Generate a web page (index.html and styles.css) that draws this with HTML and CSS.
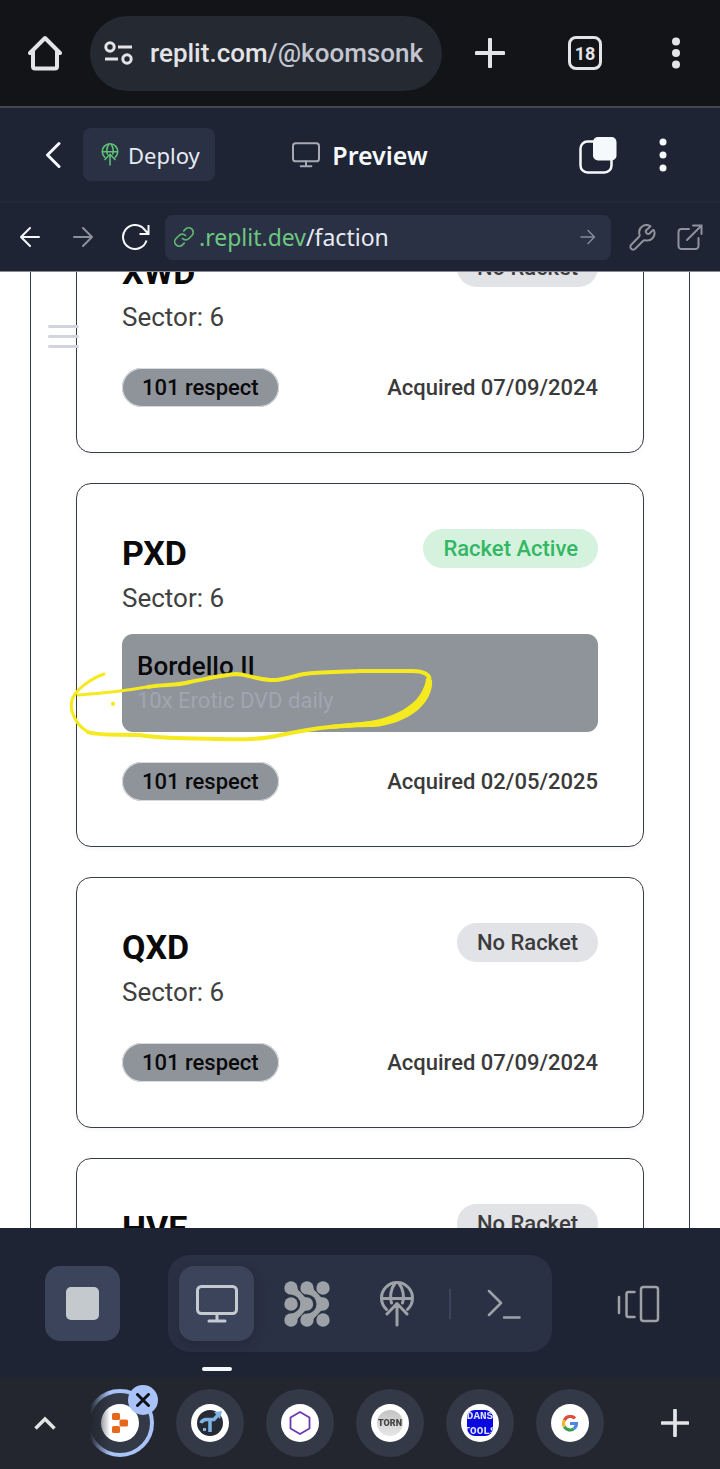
FILE: index.html
```html
<!DOCTYPE html>
<html lang="en">
<head>
<meta charset="utf-8">
<meta name="viewport" content="width=device-width, initial-scale=1">
<title>Faction preview</title>
<link rel="stylesheet" href="styles.css">
</head>
<body>
<svg class="sprite" aria-hidden="true">
  <symbol id="i-globe" viewBox="0 0 36 46"><path d="M7.500 28.500A15.500 15.500 0 1 1 28.500 28.500M2.500 17.500H33.500M16.500 2C12 7 10.500 15 12.500 22M19.500 2C24 7 25.500 15 23.500 22M18 23V44M8 33L18 22.500L28 33"/></symbol>
  <symbol id="i-monitor" viewBox="0 0 42 38"><rect x="1.500" y="1.500" width="39" height="27" rx="4"/><path d="M21 28.500V36M13 36H29"/></symbol>
  <symbol id="i-plus" viewBox="0 0 30 30"><path d="M15 1.500V28.500M1.500 15H28.500"/></symbol>
</svg>
<div class="app">
  <header class="browser">
    <button class="browser-btn home" aria-label="Home"><svg width="34" height="36" viewBox="0 0 34 36"><path d="M5 16V31.500a2 2 0 0 0 2 2H27a2 2 0 0 0 2-2V16M2 18L17 3L32 18" fill="none" stroke="#e3e3e8" stroke-width="4" stroke-linecap="round" stroke-linejoin="round"/></svg></button>
    <button class="omnibox">
      <svg width="29" height="24" viewBox="0 0 29 24" fill="none" stroke="#e3e3e8" stroke-width="3"><circle cx="6" cy="6" r="4.200"/><circle cx="23" cy="18" r="4.200"/><path d="M14 6H28M1 18H14"/></svg>
      <span class="omnibox-url">replit.com<span class="omnibox-path">/@koomsonk</span></span>
    </button>
    <button class="browser-btn" aria-label="New tab"><svg class="stroke-light" width="30" height="30"><use href="#i-plus"/></svg></button>
    <button class="browser-btn" aria-label="Open tabs"><span class="tab-count">18</span></button>
    <button class="browser-btn" aria-label="Menu"><svg width="8" height="32" viewBox="0 0 8 32" fill="#e3e3e8"><circle cx="4" cy="4.500" r="4"/><circle cx="4" cy="16" r="4"/><circle cx="4" cy="27.500" r="4"/></svg></button>
  </header>

  <div class="toolbar">
    <div class="toolbar-left">
      <button class="icon-btn back" aria-label="Back"><svg width="16" height="28" viewBox="0 0 16 28" fill="none" stroke="#f5f9fc" stroke-width="3" stroke-linecap="round" stroke-linejoin="round"><path d="M14 2.500L2.500 14L14 25.500"/></svg></button>
      <button class="deploy"><svg class="deploy-icon" width="18" height="23"><use href="#i-globe"/></svg>Deploy</button>
    </div>
    <h1 class="toolbar-title"><svg class="title-icon" width="28" height="26"><use href="#i-monitor"/></svg>Preview</h1>
    <div class="toolbar-right">
      <button class="icon-btn" aria-label="Switch pane"><svg width="38" height="38" viewBox="0 0 38 38"><rect x="1.500" y="5.500" width="31" height="31" rx="7" fill="none" stroke="#f5f9fc" stroke-width="2.500"/><rect x="14" y="1" width="23.500" height="23.500" rx="5" fill="#f5f9fc"/></svg></button>
      <button class="icon-btn more" aria-label="More"><svg width="8" height="34" viewBox="0 0 8 34" fill="#f5f9fc"><circle cx="4" cy="4" r="3.500"/><circle cx="4" cy="17" r="3.500"/><circle cx="4" cy="30" r="3.500"/></svg></button>
    </div>
  </div>

  <nav class="address" aria-label="Preview address">
    <button class="icon-btn" aria-label="Go back"><svg width="20" height="20" viewBox="0 0 20 20" fill="none" stroke="#f5f9fc" stroke-width="2" stroke-linecap="round" stroke-linejoin="round"><path d="M19 10H1M10 1L1 10L10 19"/></svg></button>
    <button class="icon-btn forward" aria-label="Go forward"><svg width="20" height="20" viewBox="0 0 20 20" fill="none" stroke="#8b919b" stroke-width="2" stroke-linecap="round" stroke-linejoin="round"><path d="M1 10H19M10 1L19 10L10 19"/></svg></button>
    <button class="icon-btn reload" aria-label="Reload"><svg width="28" height="26" viewBox="0 0 28 26" fill="none" stroke="#f5f9fc" stroke-width="2"><path d="M24.500 16.500A12 12 0 1 1 22 5L26 9.500M26.500 1V10H17.500"/></svg></button>
    <label class="field">
      <svg width="20" height="20" viewBox="0 0 20 20" fill="none" stroke="#5fb573" stroke-width="1.700" stroke-linecap="round"><path d="M8.500 11.500a4.500 4.500 0 0 0 6.400 0l3-3a4.500 4.500 0 0 0-6.400-6.400L9.800 3.800M11.500 8.500a4.500 4.500 0 0 0-6.400 0l-3 3a4.500 4.500 0 0 0 6.400 6.400l1.700-1.700"/></svg>
      <span class="field-host">.replit.dev</span>
      <input class="field-input" type="text" value="/faction" aria-label="Path">
      <svg width="16" height="16" viewBox="0 0 16 16" fill="none" stroke="#858b98" stroke-width="1.500" stroke-linecap="round" stroke-linejoin="round"><path d="M1 8H14.500M8 1.500L14.500 8L8 14.500"/></svg>
    </label>
    <button class="icon-btn" aria-label="Developer tools"><svg width="27" height="27" viewBox="0 0 27 27" fill="none" stroke="#8d929b" stroke-width="2" stroke-linecap="round" stroke-linejoin="round"><path d="M21.500 2.300A7.300 7.300 0 0 0 10.500 10.500C10.800 11.500 10.500 12.300 10 12.800L2.200 20.800A2.800 2.800 0 0 0 6.200 24.800L14 17C14.700 16.300 15.500 16 16.500 16.300A7.300 7.300 0 0 0 25 6.500C24.500 5.500 24 6 23.500 6.500L20.500 9.500C18.500 11 15.500 8 17.500 6L21 2.800Z"/></svg></button>
    <button class="icon-btn external" aria-label="Open in new tab"><svg width="26" height="26" viewBox="0 0 26 26" fill="none" stroke="#8d929b" stroke-width="2" stroke-linecap="round"><path d="M12 5H4.500A3 3 0 0 0 1.500 8V22A3 3 0 0 0 4.500 25H18.500A3 3 0 0 0 21.500 22V14M10 16L24.500 1.500M16 1.500H24.500V10"/></svg></button>
  </nav>

  <main class="preview">
    <button class="menu" aria-label="Open menu"><span class="menu-line"></span><span class="menu-line"></span><span class="menu-line"></span></button>
    <div class="panel">
      <article class="card">
        <div class="card-head"><h2 class="card-title">XWD</h2><span class="badge">No Racket</span></div>
        <p class="sector">Sector: 6</p>
        <div class="card-foot"><span class="respect">101 respect</span><span class="acquired">Acquired 07/09/2024</span></div>
      </article>
      <article class="card">
        <div class="card-head"><h2 class="card-title">PXD</h2><span class="badge badge-active">Racket Active</span></div>
        <p class="sector">Sector: 6</p>
        <div class="racket"><h3 class="racket-name">Bordello II</h3><p class="racket-reward">10x Erotic DVD daily</p></div>
        <div class="card-foot"><span class="respect">101 respect</span><span class="acquired">Acquired 02/05/2025</span></div>
        <svg class="marker" width="370" height="80" viewBox="66 665 370 80" aria-hidden="true" fill="none" stroke="#f4ea1f" stroke-linecap="round" stroke-linejoin="round">
          <path stroke-width="3" d="M104 674C90 679 75 690 72 700C69 711 76 725 88 732"/>
          <path stroke-width="4" d="M88 732C98 736 120 734 140 735C160 739 190 738 220 739C245 740 262 739 276 736C295 732 310 729 330 727C350 725 362 724 374 723"/>
          <path fill="#f4ea1f" stroke="none" d="M330 725C350 723 368 722 380 719C398 714 412 706 419 696C424 689 426 682 426 678L432 680C433 690 428 701 418 710C406 720 388 726 374 727C358 727 345 728 330 729Z"/>
          <path stroke-width="4" d="M429 681C431 675 424 671 412 671L360 671C340 672 318 672 304 674C290 677 280 681 270 680C255 679 245 674 236 674C222 675 205 679 190 682C175 686 165 684 148 687"/>
          <path stroke-width="3" d="M150 686.500C130 690 108 693 78 695"/>
          <path stroke-width="4" d="M113 703.500V704"/>
        </svg>
      </article>
      <article class="card">
        <div class="card-head"><h2 class="card-title">QXD</h2><span class="badge">No Racket</span></div>
        <p class="sector">Sector: 6</p>
        <div class="card-foot"><span class="respect">101 respect</span><span class="acquired">Acquired 07/09/2024</span></div>
      </article>
      <article class="card">
        <div class="card-head"><h2 class="card-title">HVE</h2><span class="badge">No Racket</span></div>
      </article>
    </div>
  </main>

  <nav class="dock" aria-label="Workspace">
    <button class="dock-btn dock-solid" aria-label="Stop"><span class="stop"></span></button>
    <div class="dock-group">
      <button class="dock-btn dock-solid dock-active" aria-label="Preview"><svg class="stroke-silver" width="42" height="38"><use href="#i-monitor"/></svg></button>
      <button class="dock-btn" aria-label="Agent"><svg width="46" height="46" viewBox="0 0 46 46" fill="#9da2a6" stroke-linejoin="round" stroke-linecap="round"><g><path fill="none" stroke="#9da2a6" stroke-width="8" d="M23 7L38 23L23 39"/><circle cx="23" cy="7" r="6.700"/><circle cx="38.500" cy="23" r="6.700"/><circle cx="23" cy="39" r="6.700"/></g><circle cx="23" cy="23" r="9.500" fill="#2b3144"/><g><path fill="none" stroke="#9da2a6" stroke-width="8" d="M7 7L22 23L7 39"/><circle cx="7" cy="7" r="6.700"/><circle cx="22.500" cy="23" r="6.700"/><circle cx="7" cy="39" r="6.700"/></g><circle cx="7" cy="23" r="9.300" fill="#2b3144"/><circle cx="7" cy="23" r="6.700"/><circle cx="39" cy="7" r="6.700"/><circle cx="39" cy="39" r="6.700"/></svg></button>
      <button class="dock-btn" aria-label="Deployments"><svg class="stroke-grey" width="36" height="46"><use href="#i-globe"/></svg></button>
      <span class="dock-divider"></span>
      <button class="dock-btn" aria-label="Shell"><svg width="34" height="30" viewBox="0 0 34 30" fill="none" stroke="#9da2a6" stroke-width="2.500" stroke-linecap="round" stroke-linejoin="round"><path d="M2 2L14 14L2 26M17 28.500H32.500"/></svg></button>
    </div>
    <button class="dock-btn" aria-label="All panes"><svg width="44" height="38" viewBox="0 0 44 38" fill="none" stroke="#9da2a6" stroke-width="2.500" stroke-linecap="round" stroke-linejoin="round"><rect x="25" y="2" width="17" height="34" rx="2.500"/><path d="M18.500 7H12.500A2 2 0 0 0 10.500 9V30A2 2 0 0 0 12.500 32H18.500M3 12V28"/></svg></button>
  </nav>

  <footer class="tabs">
    <button class="tabs-edge" aria-label="Expand tabs"><svg width="22" height="14" viewBox="0 0 22 14" fill="none" stroke="#e3e3e3" stroke-width="3.500"><path d="M1.500 12.500L11 3L20.500 12.500"/></svg></button>
    <div class="tab-list">
      <button class="tab tab-current" aria-label="Replit"><span class="favicon"><svg width="16" height="20" viewBox="0 0 16 20" fill="#e8681b"><rect width="8" height="7" rx="1.500"/><rect x="7.500" y="6.500" width="8.500" height="7" rx="1.500"/><rect y="13" width="8" height="7" rx="1.500"/></svg></span>
        <span class="tab-close"><svg width="14" height="14" viewBox="0 0 14 14" stroke="#10131c" stroke-width="3" stroke-linecap="round"><path d="M1.500 1.500L12.500 12.500M12.500 1.500L1.500 12.500"/></svg></span></button>
      <button class="tab" aria-label="TornStats"><span class="favicon"><svg width="26" height="26" viewBox="0 0 26 26"><circle cx="13" cy="13" r="13" fill="#252a35"/><path d="M4 13Q5 10 9 9.500H17L22 4M13 10V22" fill="none" stroke="#7fb4e2" stroke-width="3.500"/><path d="M17 2L25 1L23 9ZM6 18H9V21H6Z" fill="#7fb4e2"/></svg></span></button>
      <button class="tab" aria-label="Hexagon"><span class="favicon"><svg width="24" height="24" viewBox="0 0 24 24" fill="none" stroke="#6a38b5" stroke-width="1.800" stroke-linejoin="round"><path d="M12 1L21.500 6.500V17.500L12 23L2.500 17.500V6.500Z"/></svg></span></button>
      <button class="tab" aria-label="Torn"><span class="favicon"><span class="torn">TORN</span></span></button>
      <button class="tab" aria-label="Dans Tools"><span class="favicon"><span class="dans"><span>DANS</span><span>TOOLS</span></span></span></button>
      <button class="tab" aria-label="Google"><span class="favicon"><svg width="16" height="17" viewBox="0 0 16 17" fill="none" stroke-width="3.200"><path stroke="#d9503f" d="M13 3.500A6.400 6.400 0 0 0 2.400 5.300"/><path stroke="#f0b72c" d="M2.400 5.300A6.400 6.400 0 0 0 2.400 11.700"/><path stroke="#3e9b52" d="M2.400 11.700A6.400 6.400 0 0 0 11.800 13.700"/><path stroke="#4c86e6" d="M11.800 13.700A6.400 6.400 0 0 0 14.400 8.500H8"/></svg></span></button>
    </div>
    <button class="tabs-edge" aria-label="Add tab"><svg class="stroke-light" width="28" height="28"><use href="#i-plus"/></svg></button>
  </footer>
</div>
</body>
</html>
```
FILE: styles.css
```css
*, *::before, *::after { box-sizing: border-box; }
body { margin: 0; background: #fff; font-family: Roboto, "Liberation Sans", sans-serif; }
button { padding: 0; border: 0; background: none; color: inherit; font: inherit; cursor: pointer; }
button, label { display: flex; align-items: center; justify-content: center; }
h1, h2, h3, p { margin: 0; }
svg { display: block; flex: none; }
.sprite { position: absolute; width: 0; height: 0; }
.app { display: flex; flex-direction: column; height: 100vh; }

.stroke-light, .stroke-silver, .stroke-grey, .title-icon, .deploy-icon { fill: none; stroke-linecap: round; stroke-linejoin: round; stroke-width: 3px; }
.stroke-light { stroke: #e3e3e8; stroke-width: 4px; }
.stroke-silver { stroke: #c5cad0; }
.stroke-grey { stroke: #9da2a6; }
.title-icon { stroke: #a5aab3; }
.deploy-icon { stroke: #5fc478; }

.browser { display: flex; align-items: center; flex: none; height: 108px; border-bottom: 2px solid #44464d; background: #121417; }
.browser-btn { flex: none; width: 90px; height: 90px; }
.browser-btn:nth-of-type(3) { width: 96px; }
.browser-btn:nth-of-type(4) { width: 94px; }
.browser-btn:nth-of-type(5) { width: 88px; }
.omnibox { flex: 1; min-width: 0; height: 75px; padding: 0 14px; gap: 17px; border-radius: 38px; background: #252931; }
.omnibox-url { flex: 1; overflow: hidden; color: #e3e3e8; font-size: 26px; font-weight: 500; line-height: 40px; text-align: left; white-space: nowrap; }
.omnibox-path { color: #c3c6d0; }
.tab-count { display: flex; align-items: center; justify-content: center; width: 34px; height: 34px; border: 3px solid #e3e3e8; border-radius: 8px; color: #e3e3e8; font-size: 18px; font-weight: 700; }

.toolbar { display: grid; grid-template-columns: 1fr auto 1fr; align-items: center; flex: none; height: 95px; padding: 0 45px; border-bottom: 2px solid #222838; background: #1e2433; color: #f5f9fc; font-family: "Noto Sans", sans-serif; }
.toolbar-left, .toolbar-right { display: flex; align-items: center; }
.toolbar-left { gap: 22px; }
.toolbar-right { justify-content: flex-end; gap: 42px; padding-right: 8px; }
.deploy { height: 53px; padding: 0 15px 0 18px; gap: 9px; border-radius: 8px; background: #2b3144; color: #e6ebf2; font-size: 22px; line-height: 28px; }
.toolbar-title { display: flex; align-items: center; gap: 12px; font-size: 25px; font-weight: 600; line-height: 32px; }

.address { display: flex; align-items: center; flex: none; height: 69px; padding: 0 17px 0 20px; border-bottom: 1px solid #858992; background: #1e2433; font-family: "Noto Sans", sans-serif; }
.forward { margin-left: 33px; }
.reload { margin: 0 15px 0 29px; }
.field { flex: 1; min-width: 0; height: 45px; margin-right: 18px; padding: 0 15px 0 9px; border-radius: 8px; background: #2b3144; font-size: 23px; }
.field-host { margin-left: 5px; color: #6cc781; }
.field-input { flex: 1; min-width: 0; padding: 0; border: 0; outline: 0; background: none; color: #e6ebf2; font: inherit; }
.external { margin-left: 21px; }

.preview { position: relative; flex: 1; min-height: 0; overflow: hidden; background: #fff; }
.panel { display: flex; flex-direction: column; gap: 30px; margin: -70px 30px 0; padding: 0 45px; border: solid #373d45; border-width: 0 1px; }
.menu { position: absolute; z-index: 1; top: 53px; left: 48px; flex-direction: column; gap: 7px; width: 31px; }
.menu-line { width: 100%; height: 3px; border-radius: 2px; background: #d1d5db; }
.card { position: relative; padding: 45px; border: 1px solid #373d45; border-radius: 15px; background: #fff; box-shadow: 0 2px 4px rgba(0, 0, 0, .04); }
.card-head { display: flex; align-items: flex-start; justify-content: space-between; }
.card-title { color: #0a0a0a; font-size: 34px; font-weight: 700; line-height: 48px; }
.badge, .respect { padding: 0 20px; border-radius: 20px; font-size: 22px; font-weight: 500; line-height: 39px; }
.badge { background: #e2e3e7; color: #3c3c3e; }
.badge-active { background: #d4f2de; color: #34b764; }
.sector { color: #404040; font-size: 26px; line-height: 42px; }
.racket { margin-top: 15px; padding: 15px; border-radius: 11px; background: #8f949b; }
.racket-name { color: #0a0a0a; font-size: 26px; font-weight: 500; line-height: 35px; }
.racket-reward { color: #a1a5b1; font-size: 22px; line-height: 33px; }
.card-foot { display: flex; align-items: center; justify-content: space-between; margin-top: 30px; }
.respect { background: #8f949b; color: #0a0a0a; box-shadow: inset 0 0 0 1px #d9dbde; }
.acquired { color: #3a3a3a; font-size: 22px; font-weight: 500; }
.marker { position: absolute; top: 181px; left: -11px; pointer-events: none; }

.dock { display: flex; align-items: center; justify-content: space-between; flex: none; height: 149px; padding: 2px 45px 0; background: #1e2433; }
.dock-btn { position: relative; flex: none; width: 75px; height: 75px; border-radius: 15px; }
.dock-solid { background: #3c445b; }
.stop { width: 33px; height: 33px; border-radius: 5px; background: #c4c9ce; }
.dock-group { display: flex; align-items: center; gap: 15px; height: 97px; padding: 0 11px; border-radius: 22px; background: #2b3144; }
.dock-active { box-shadow: 0 4px 12px rgba(15, 20, 35, .3); }
.dock-active::after { content: ""; position: absolute; top: 101px; left: 23px; width: 30px; height: 4px; border-radius: 2px; background: #f5f9fc; }
.dock-divider { width: 2px; height: 30px; background: #3c445b; }

.tabs { display: flex; align-items: center; flex: none; height: 92px; background: #23262f; }
.tabs-edge { flex: none; width: 90px; height: 90px; }
.tab-list { display: flex; align-items: center; flex: 1; gap: 22px; min-width: 0; height: 92px; overflow: hidden; -webkit-mask-image: linear-gradient(to right, transparent, #000 20px); mask-image: linear-gradient(to right, transparent, #000 20px); }
.tab { position: relative; flex: none; width: 68px; height: 68px; border-radius: 50%; background: #333947; }
.tab-current { margin-left: -4px; border: 4px solid #a9c3f8; }
.tab-close { position: absolute; top: -8px; right: -8px; display: flex; align-items: center; justify-content: center; width: 30px; height: 30px; border-radius: 50%; background: #a9c3f8; }
.favicon { display: flex; align-items: center; justify-content: center; width: 38px; height: 38px; border-radius: 50%; background: #fff; }
.torn, .dans { display: flex; align-items: center; justify-content: center; width: 26px; height: 26px; overflow: hidden; border-radius: 50%; }
.torn { background: linear-gradient(#c4c4c4, #e6e6e6); color: #444; font-size: 9px; font-weight: 900; }
.dans { flex-direction: column; gap: 5px; border-radius: 8px; background: #0a0ae0; color: #dfe3ff; font-family: "Liberation Mono", monospace; font-size: 11px; font-weight: 700; line-height: 10px; }
```
